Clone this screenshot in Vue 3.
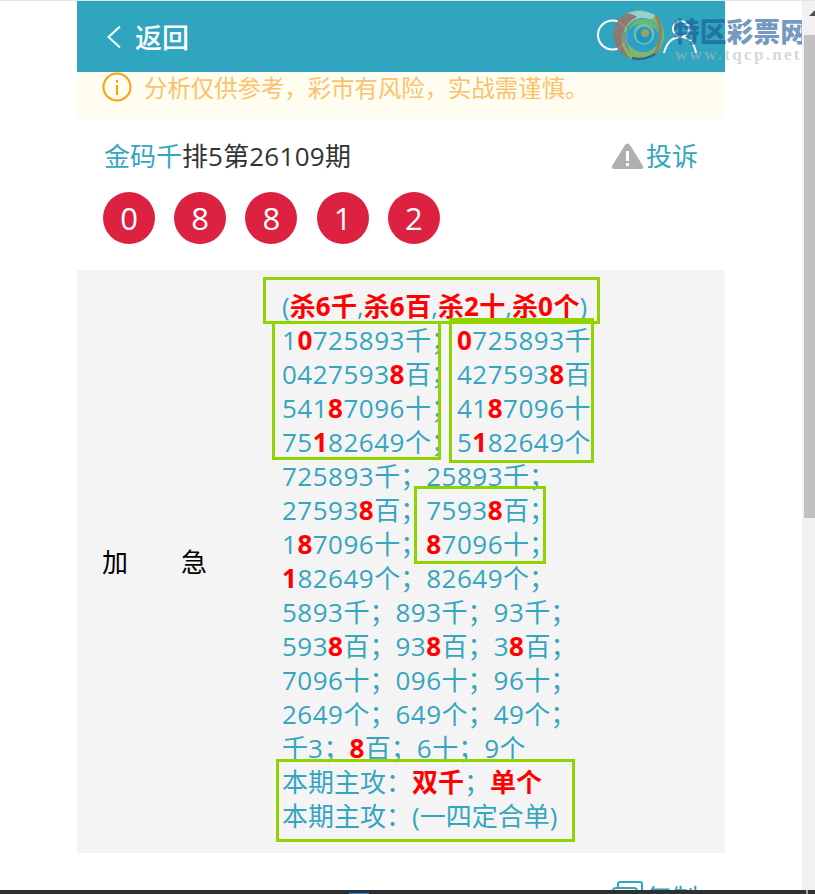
<script setup>
const balls = ['0', '8', '8', '1', '2']

const rawLines = [
  '(*杀6千*,*杀6百*,*杀2十*,*杀0个*)',
  '1*0*725893千；*0*725893千',
  '0427593*8*百；427593*8*百',
  '541*8*7096十；41*8*7096十',
  '75*1*82649个；5*1*82649个',
  '725893千；25893千；',
  '27593*8*百；7593*8*百；',
  '1*8*7096十；*8*7096十；',
  '*1*82649个；82649个；',
  '5893千；893千；93千；',
  '593*8*百；93*8*百；3*8*百；',
  '7096十；096十；96十；',
  '2649个；649个；49个；',
  '千3；*8*百；6十；9个',
  '本期主攻：*双千*；*单个*',
  '本期主攻：(一四定合单)'
]

const runs = (text) =>
  text
    .split(/(\d+)/)
    .filter(Boolean)
    .map((t) => ({ t, num: /^\d/.test(t) }))

const lines = rawLines.map((line) =>
  line.split('*').map((text, i) => ({ runs: runs(text), hot: i % 2 === 1 }))
)
</script>

<template>
  <div class="page">
    <div class="viewport">
      <div class="column">
        <header class="topbar">
          <svg class="chevron" width="16" height="24" viewBox="0 0 16 24">
            <path d="M14 1.5 L2.5 12 L14 22.5" fill="none" stroke="#fff" stroke-width="2" />
          </svg>
          <span class="back">返回</span>
        </header>

        <div class="notice">
          <svg width="30" height="30" viewBox="0 0 30 30">
            <circle cx="15" cy="15" r="13.5" fill="none" stroke="#ff9f0a" stroke-width="2" />
            <rect x="14" y="13" width="2" height="10" fill="#ff9f0a" />
            <rect x="14" y="8" width="2" height="2.5" fill="#ff9f0a" />
          </svg>
          <span>分析仅供参考，彩市有风险，实战需谨慎。</span>
        </div>

        <section class="summary">
          <div class="title-row">
            <div class="title"><span class="teal">金码千</span>排<span class="num">5</span>第<span class="num">26109</span>期</div>
            <div class="action">
              <svg width="33" height="28" viewBox="0 0 33 28">
                <path d="M16.5 1.5 Q18 1.5 19 3 L32 24 Q33 27 30 27 L3 27 Q0 27 1 24 L14 3 Q15 1.5 16.5 1.5 Z" fill="#b0b0b0" />
                <rect x="15" y="9" width="3" height="10" fill="#fff" />
                <rect x="15" y="21" width="3" height="3" fill="#fff" />
              </svg>
              <span>投诉</span>
            </div>
          </div>
          <div class="balls">
            <span v-for="(b, i) in balls" :key="i" class="ball">{{ b }}</span>
          </div>
        </section>

        <section class="detail">
          <div class="label"><span>加</span><span>急</span></div>
          <div class="numbers">
            <div v-for="(line, i) in lines" :key="i" class="line">
              <component :is="seg.hot ? 'b' : 'span'" v-for="(seg, j) in line" :key="j"><span v-for="(r, k) in seg.runs" :key="k" :class="{ num: r.num }">{{ r.t }}</span></component>
            </div>
            <i class="mark mark-a"></i>
            <i class="mark mark-b"></i>
            <i class="mark mark-c"></i>
            <i class="mark mark-d"></i>
            <i class="mark mark-e"></i>
          </div>
        </section>

        <div class="copy">
          <svg width="31" height="26" viewBox="0 0 31 26">
            <path d="M6 7 V3 Q6 1 8 1 H28 Q30 1 30 3 V25" fill="none" stroke="#34a6bf" stroke-width="2" />
            <rect x="1" y="7" width="24" height="18" rx="3" fill="#fff" stroke="#34a6bf" stroke-width="2" />
          </svg>
          <span>复制</span>
        </div>
      </div>

      <div class="overlay-icons">
        <svg width="115" height="50" viewBox="0 0 115 50">
          <circle cx="15.5" cy="19" r="14.5" fill="none" stroke="#fff" stroke-width="2" />
          <circle cx="84" cy="13" r="8" fill="none" stroke="#fff" stroke-width="2" />
          <path d="M67 37 Q71 21 84 21 Q96 21 99 37" fill="none" stroke="#fff" stroke-width="2" />
        </svg>
      </div>

      <div class="watermark">
        <svg class="swirl" width="52" height="52" viewBox="0 0 52 52">
          <circle cx="26" cy="26" r="25" fill="#8eb764" />
          <path d="M9 8 Q24 -3 42 6 Q40 12 32 10 Q22 8 14 16 Z" fill="#a6d3d4" />
          <path d="M12 5 A25 25 0 0 0 18 50 Q6 38 10 24 Q13 13 24 8 Q18 3 12 5 Z" fill="#96766a" />
          <path d="M10 24 Q8 36 18 44 Q12 34 15 24 Q12 22 10 24 Z" fill="#7d8f86" />
          <path d="M14 30 Q18 46 34 46 Q44 44 47 32 Q40 42 28 40 Q18 38 14 30 Z" fill="#7dba6c" />
          <circle cx="30" cy="26" r="17" fill="#2c9fc9" />
          <path d="M15 22 Q20 8 34 10 Q44 12 46 24 Q38 14 28 15 Q20 16 15 22 Z" fill="#6fb96a" />
          <circle cx="31" cy="25" r="10.5" fill="#7cc0a0" />
          <circle cx="31" cy="26" r="8" fill="#1a96c8" />
          <circle cx="32" cy="24" r="4" fill="#a8a450" />
          <path d="M43 7 Q53 24 42 45" fill="none" stroke="#a57f52" stroke-width="3" />
          <path d="M42 45 Q31 52 19 49" fill="none" stroke="#35607f" stroke-width="2.5" />
        </svg>
        <div class="wm-text">
          <div class="wm-cn">特区彩票网</div>
          <div class="wm-en">www.tqcp.net</div>
        </div>
      </div>

      <div class="scrollbar">
        <div class="scroll-up"><i></i></div>
        <div class="scroll-thumb"></div>
      </div>
    </div>
    <div class="taskbar">
      <i class="task-blue"></i>
      <i class="task-pip"></i>
    </div>
  </div>
</template>

<style>
html,
body {
  margin: 0;
  padding: 0;
  overflow: hidden;
  background: #fff;
}
</style>

<style scoped>
.page {
  width: 815px;
  height: 894px;
  display: flex;
  flex-direction: column;
  overflow: hidden;
  font-family: "Open Sans", "Noto Sans CJK SC", sans-serif;
  font-size: 26px;
  color: #333;
}

.num {
  letter-spacing: 0.28px;
}

.line .num {
  letter-spacing: 0.5px;
}

.viewport {
  position: relative;
  flex: 1;
  min-height: 0;
  overflow: hidden;
  display: flex;
  border-top: 1px solid #e4e4e4;
}

.column {
  width: 648px;
  margin-left: 77px;
  margin-right: 77px;
  flex: none;
}

.topbar {
  height: 71px;
  background: #30a5bf;
  display: flex;
  align-items: center;
  padding-left: 29px;
  gap: 13px;
  color: #fff;
}

.back {
  font-size: 27px;
  font-weight: 500;
  line-height: 1;
  margin-top: 2px;
}

.notice {
  height: 47px;
  background: #fffdf0;
  display: flex;
  align-items: flex-start;
  gap: 12px;
  padding-left: 25px;
  color: #fcc16c;
  font-size: 23.4px;
  line-height: 32px;
}

.summary {
  padding: 20px 27px 26px 26px;
}

.title-row {
  display: flex;
  justify-content: space-between;
  align-items: center;
  height: 34px;
  line-height: 34px;
}

.title {
  margin-left: 1px;
}

.teal,
.action span {
  color: #34a6bf;
}

.action {
  display: flex;
  align-items: center;
  gap: 2px;
}

.balls {
  display: flex;
  gap: 19.2px;
  margin-top: 19px;
}

.ball {
  width: 52px;
  height: 52px;
  border-radius: 50%;
  background: #dc2240;
  color: #fff;
  display: flex;
  align-items: center;
  justify-content: center;
  font-size: 31px;
}

.detail {
  box-sizing: border-box;
  background: #f4f4f4;
  display: flex;
  align-items: center;
  height: 583px;
  padding: 0 0 2px 25px;
}

.label {
  width: 105px;
  display: flex;
  justify-content: space-between;
  color: #000;
  flex: none;
}

.numbers {
  position: relative;
  margin-left: 75px;
  width: 400px;
  color: #34a6bf;
  line-height: 34px;
}

.line {
  height: 34px;
  white-space: pre;
}

.line b {
  color: #f00;
  font-weight: 700;
}

.mark {
  position: absolute;
  border: 3px solid #8fd300;
  box-sizing: border-box;
}

.mark-a { left: -19px; top: -12px; width: 337px; height: 47px; }
.mark-b { left: -10px; top: 32px; width: 169px; height: 139px; }
.mark-c { left: 167px; top: 29px; width: 145px; height: 145px; }
.mark-d { left: 132px; top: 197px; width: 132px; height: 78px; }
.mark-e { left: -6px; top: 470px; width: 299px; height: 83px; }

.copy {
  display: flex;
  justify-content: flex-end;
  align-items: flex-start;
  gap: 3px;
  padding: 28px 27px 0 0;
  color: #34a6bf;
  line-height: 34px;
}

.overlay-icons {
  position: absolute;
  left: 597px;
  top: 15px;
}

.watermark {
  position: absolute;
  left: 613px;
  top: 8px;
  display: flex;
  gap: 8px;
}

.swirl {
  opacity: 0.9;
}

.wm-text {
  margin-top: 7px;
}

.wm-cn {
  font-family: "Noto Sans CJK SC", sans-serif;
  font-size: 26.8px;
  font-weight: 900;
  line-height: 30px;
  color: rgba(24, 84, 148, 0.6);
}

.wm-en {
  font-family: "Liberation Serif", serif;
  font-size: 17px;
  font-weight: 700;
  letter-spacing: 2.3px;
  line-height: 18px;
  margin-left: 2px;
  color: rgba(175, 185, 190, 0.55);
}

.scrollbar {
  position: absolute;
  right: 0;
  top: -1px;
  bottom: 0;
  width: 13px;
  background: #f1f1f1;
  overflow: hidden;
}

.scroll-up {
  height: 35px;
  position: relative;
}

.scroll-up i {
  position: absolute;
  left: 7px;
  top: 10px;
  width: 0;
  height: 0;
  border-left: 6px solid transparent;
  border-right: 6px solid transparent;
  border-bottom: 6px solid #505050;
}

.scroll-thumb {
  height: 483px;
  margin-left: 2px;
  background: #c1c1c1;
}

.taskbar {
  position: relative;
  height: 4px;
  background: #2f3033;
  flex: none;
}

.task-blue {
  position: absolute;
  left: 349px;
  top: 3px;
  width: 20px;
  height: 1px;
  background: #2f83d6;
}

.task-pip {
  position: absolute;
  left: 806px;
  top: 0;
  width: 2px;
  height: 4px;
  background: #a8a8a8;
}
</style>
